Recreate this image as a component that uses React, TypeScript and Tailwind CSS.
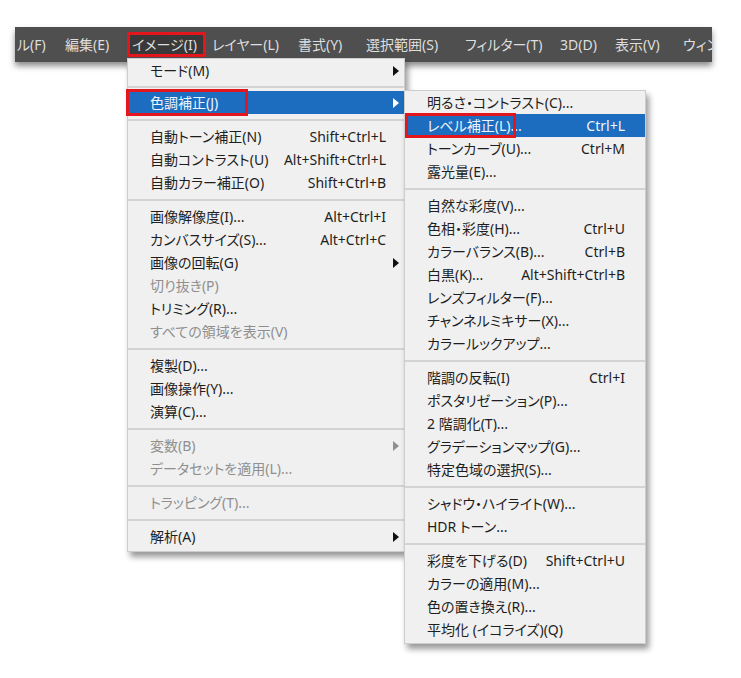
import React from "react";

type Item =
  | "sep"
  | "sep9"
  | {
      t: string;
      s?: string;
      arrow?: boolean;
      dis?: boolean;
      hl?: boolean;
      box?: string;
    };

const menu1: Item[] = [
  { t: "モード(M)", arrow: true },
  "sep9",
  { t: "色調補正(J)", arrow: true, hl: true, box: "m1" },
  "sep",
  { t: "自動トーン補正(N)", s: "Shift+Ctrl+L" },
  { t: "自動コントラスト(U)", s: "Alt+Shift+Ctrl+L" },
  { t: "自動カラー補正(O)", s: "Shift+Ctrl+B" },
  "sep",
  { t: "画像解像度(I)...", s: "Alt+Ctrl+I" },
  { t: "カンバスサイズ(S)...", s: "Alt+Ctrl+C" },
  { t: "画像の回転(G)", arrow: true },
  { t: "切り抜き(P)", dis: true },
  { t: "トリミング(R)..." },
  { t: "すべての領域を表示(V)", dis: true },
  "sep",
  { t: "複製(D)..." },
  { t: "画像操作(Y)..." },
  { t: "演算(C)..." },
  "sep",
  { t: "変数(B)", arrow: true, dis: true },
  { t: "データセットを適用(L)...", dis: true },
  "sep",
  { t: "トラッピング(T)...", dis: true },
  "sep",
  { t: "解析(A)", arrow: true },
];

const menu2: Item[] = [
  { t: "明るさ・コントラスト(C)..." },
  { t: "レベル補正(L)...", s: "Ctrl+L", hl: true, box: "m2" },
  { t: "トーンカーブ(U)...", s: "Ctrl+M" },
  { t: "露光量(E)..." },
  "sep",
  { t: "自然な彩度(V)..." },
  { t: "色相・彩度(H)...", s: "Ctrl+U" },
  { t: "カラーバランス(B)...", s: "Ctrl+B" },
  { t: "白黒(K)...", s: "Alt+Shift+Ctrl+B" },
  { t: "レンズフィルター(F)..." },
  { t: "チャンネルミキサー(X)..." },
  { t: "カラールックアップ..." },
  "sep",
  { t: "階調の反転(I)", s: "Ctrl+I" },
  { t: "ポスタリゼーション(P)..." },
  { t: "2 階調化(T)..." },
  { t: "グラデーションマップ(G)..." },
  { t: "特定色域の選択(S)..." },
  "sep",
  { t: "シャドウ・ハイライト(W)..." },
  { t: "HDR トーン..." },
  "sep",
  { t: "彩度を下げる(D)", s: "Shift+Ctrl+U" },
  { t: "カラーの適用(M)..." },
  { t: "色の置き換え(R)..." },
  { t: "平均化 (イコライズ)(Q)" },
];

function Arrow({ color }: { color: string }) {
  return (
    <svg width="6" height="10" viewBox="0 0 6 10" className="shrink-0">
      <path d="M0 0 L6 5 L0 10 Z" fill={color} />
    </svg>
  );
}

function Menu({ items, sub }: { items: Item[]; sub?: boolean }) {
  return (
    <div className="flex flex-col">
      {items.map((it, i) => {
        if (it === "sep" || it === "sep9")
          return (
            <div key={i} className={`${it === "sep9" ? "h-[9px]" : "h-[11px]"} flex items-center`}>
              <div className="h-[2px] w-full bg-[#d3d3d3]" />
            </div>
          );
        const color = it.hl ? "text-[#eef4fb]" : it.dis ? "text-[#8f8f8f]" : "text-[#1e1e1e]";
        return (
          <div
            key={i}
            className={`relative h-[23px] flex items-center ${it.hl ? "bg-[#1c6dbf]" : ""} ${color} ${
              sub ? "pl-[22px] pr-[20px]" : "pl-[22px] pr-[5px]"
            }`}
          >
            <span className="flex-1 whitespace-nowrap">{it.t}</span>
            {it.s && (
              <span className={`whitespace-nowrap ${sub ? "" : "mr-[13px]"}`}>{it.s}</span>
            )}
            {it.arrow && (
              <Arrow color={it.hl ? "#ffffff" : it.dis ? "#8f8f8f" : "#111111"} />
            )}
            {it.box === "m1" && (
              <div className="absolute left-[-2px] top-[-2px] w-[122px] h-[27px] border-[3px] border-[#e3151d]" />
            )}
            {it.box === "m2" && (
              <div className="absolute left-[0px] top-[-1px] w-[111px] h-[25px] border-[3px] border-[#e3151d]" />
            )}
          </div>
        );
      })}
    </div>
  );
}

export default function App() {
  return (
    <div
      className="relative w-[741px] h-[678px] bg-white overflow-hidden text-[14px] [font-feature-settings:'palt']"
      style={{ fontFamily: '"Noto Sans", "Noto Sans CJK JP", sans-serif' }}
    >
      <div className="pt-[27px] pl-[15px]">
        <div className="w-[697px] h-[35px] bg-[#4f4f4f] shadow-[0_4px_6px_rgba(0,0,0,0.45)] flex items-start overflow-hidden text-[#dedede] whitespace-nowrap">
          <div className="flex items-center h-[25px] mt-[5px]">
            <div className="w-[50px] pl-[2px] shrink-0">ル(F)</div>
            <div className="w-[62px] shrink-0">編集(E)</div>
            <div className="w-[79px] h-[25px] shrink-0 flex items-center pl-[2px] bg-[#393939] border-[3px] border-[#e3151d]">
              イメージ(I)
            </div>
            <div className="w-[92px] pl-[6px] shrink-0">レイヤー(L)</div>
            <div className="w-[68px] shrink-0">書式(Y)</div>
            <div className="w-[99px] shrink-0">選択範囲(S)</div>
            <div className="w-[95px] shrink-0">フィルター(T)</div>
            <div className="w-[55px] shrink-0">3D(D)</div>
            <div className="w-[68px] shrink-0">表示(V)</div>
            <div className="w-[29px] shrink-0 overflow-hidden">ウィンドウ(W)</div>
          </div>
        </div>
      </div>

      <div className="absolute left-[127px] top-[58px] w-[278px] pb-[3px] bg-[#f0f0f0] border border-[#cdcdcd] shadow-[3px_5px_6px_rgba(0,0,0,0.4)]">
        <Menu items={menu1} />
      </div>

      <div className="absolute left-[404px] top-[90px] w-[242px] pb-[2px] bg-[#f0f0f0] border border-[#cdcdcd] shadow-[3px_5px_6px_rgba(0,0,0,0.4)]">
        <Menu items={menu2} sub />
      </div>
    </div>
  );
}
